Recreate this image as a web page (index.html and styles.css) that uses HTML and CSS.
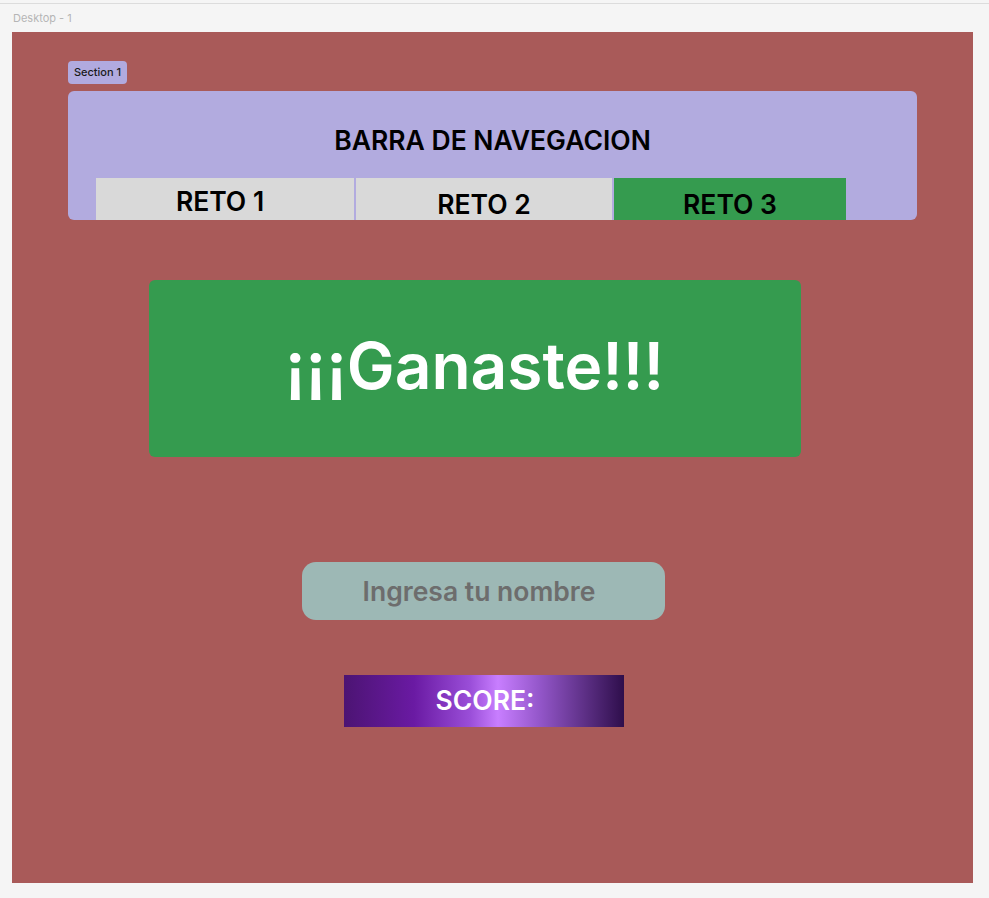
FILE: index.html
```html
<!DOCTYPE html>
<html lang="es">
<head>
<meta charset="utf-8">
<title>Desktop - 1</title>
<link rel="stylesheet" href="styles.css">
</head>
<body>
<div class="topline"></div>
<div class="canvas">
  <div class="frame-label">Desktop - 1</div>
  <div class="frame">
    <div class="section-label">Section 1</div>
    <div class="nav">
      <div class="nav-title">BARRA DE NAVEGACION</div>
      <div class="tabs">
        <div class="tab tab-1"><span>RETO 1</span></div>
        <div class="tab tab-2"><span>RETO 2</span></div>
        <div class="tab tab-3"><span>RETO 3</span></div>
      </div>
    </div>
    <div class="win"><span>¡¡¡Ganaste!!!</span></div>
    <div class="name-input">Ingresa tu nombre</div>
    <div class="score">SCORE:</div>
  </div>
</div>
</body>
</html>
```
FILE: styles.css
```css
* { box-sizing: border-box; }
html, body { margin: 0; padding: 0; }
body {
  background: #f5f5f5;
  font-family: Inter, "Noto Sans", sans-serif;
  width: 989px;
  height: 898px;
  overflow: hidden;
}
.topline {
  height: 4px;
  border-bottom: 1px solid #dcdcdc;
  background: #f5f5f5;
}
.canvas {
  padding-left: 12px;
}
.frame-label {
  height: 28px;
  padding-top: 7px;
  padding-left: 1px;
  font-size: 11px;
  color: #b5b5b5;
  line-height: 14px;
}
.frame {
  width: 961px;
  height: 851px;
  background: #a95a59;
  padding: 29px 0 0 56px;
}
.section-label {
  height: 23px;
  width: 59px;
  background: #b1aadf;
  border-radius: 4px;
  font-size: 11px;
  font-weight: 500;
  color: #1a1a1a;
  line-height: 23px;
  text-align: center;
}
.nav {
  margin-top: 7px;
  width: 849px;
  height: 129px;
  background: #b2abdf;
  border-radius: 6px;
  padding: 36px 0 0 28px;
  display: flex;
  flex-direction: column;
}
.nav-title {
  width: 793px;
  text-align: center;
  font-size: 26.5px;
  font-weight: 600;
  color: #000;
  line-height: 26px;
  height: 51px;
}
.tabs {
  display: flex;
  gap: 2px;
  height: 42px;
}
.tab {
  background: #d9d9d9;
  display: flex;
  justify-content: center;
  font-size: 26.5px;
  font-weight: 600;
  color: #000;
  line-height: 28px;
}
.tab-1 { width: 258px; padding-top: 9px; padding-right: 10px; }
.tab-2 { width: 256px; padding-top: 12px; }
.tab-3 { width: 232px; padding-top: 12px; background: #359b4f; }
.win {
  margin: 60px 0 0 81px;
  width: 652px;
  height: 177px;
  background: #359b4f;
  border-radius: 6px;
  display: flex;
  justify-content: center;
  padding-top: 48px;
}
.win span {
  display: inline-block;
  font-size: 64px;
  font-weight: 600;
  color: #fff;
  line-height: 76px;
  margin-right: 1px;
}
.name-input {
  margin: 105px 0 0 234px;
  width: 363px;
  height: 58px;
  background: #9db8b5;
  border-radius: 14px;
  text-align: center;
  font-size: 26.5px;
  font-weight: 600;
  color: #6d6d6d;
  line-height: 58px;
  padding-right: 9px;
}
.score {
  margin: 55px 0 0 276px;
  width: 280px;
  height: 52px;
  background: linear-gradient(90deg, #4c1473 0%, #6a1aa3 25%, #9a4ed8 45%, #c87eff 55%, #9356c9 70%, #2e0e4b 100%);
  text-align: center;
  font-size: 26.5px;
  font-weight: 600;
  color: #fff;
  line-height: 50px;
  padding-left: 2px;
}
```
